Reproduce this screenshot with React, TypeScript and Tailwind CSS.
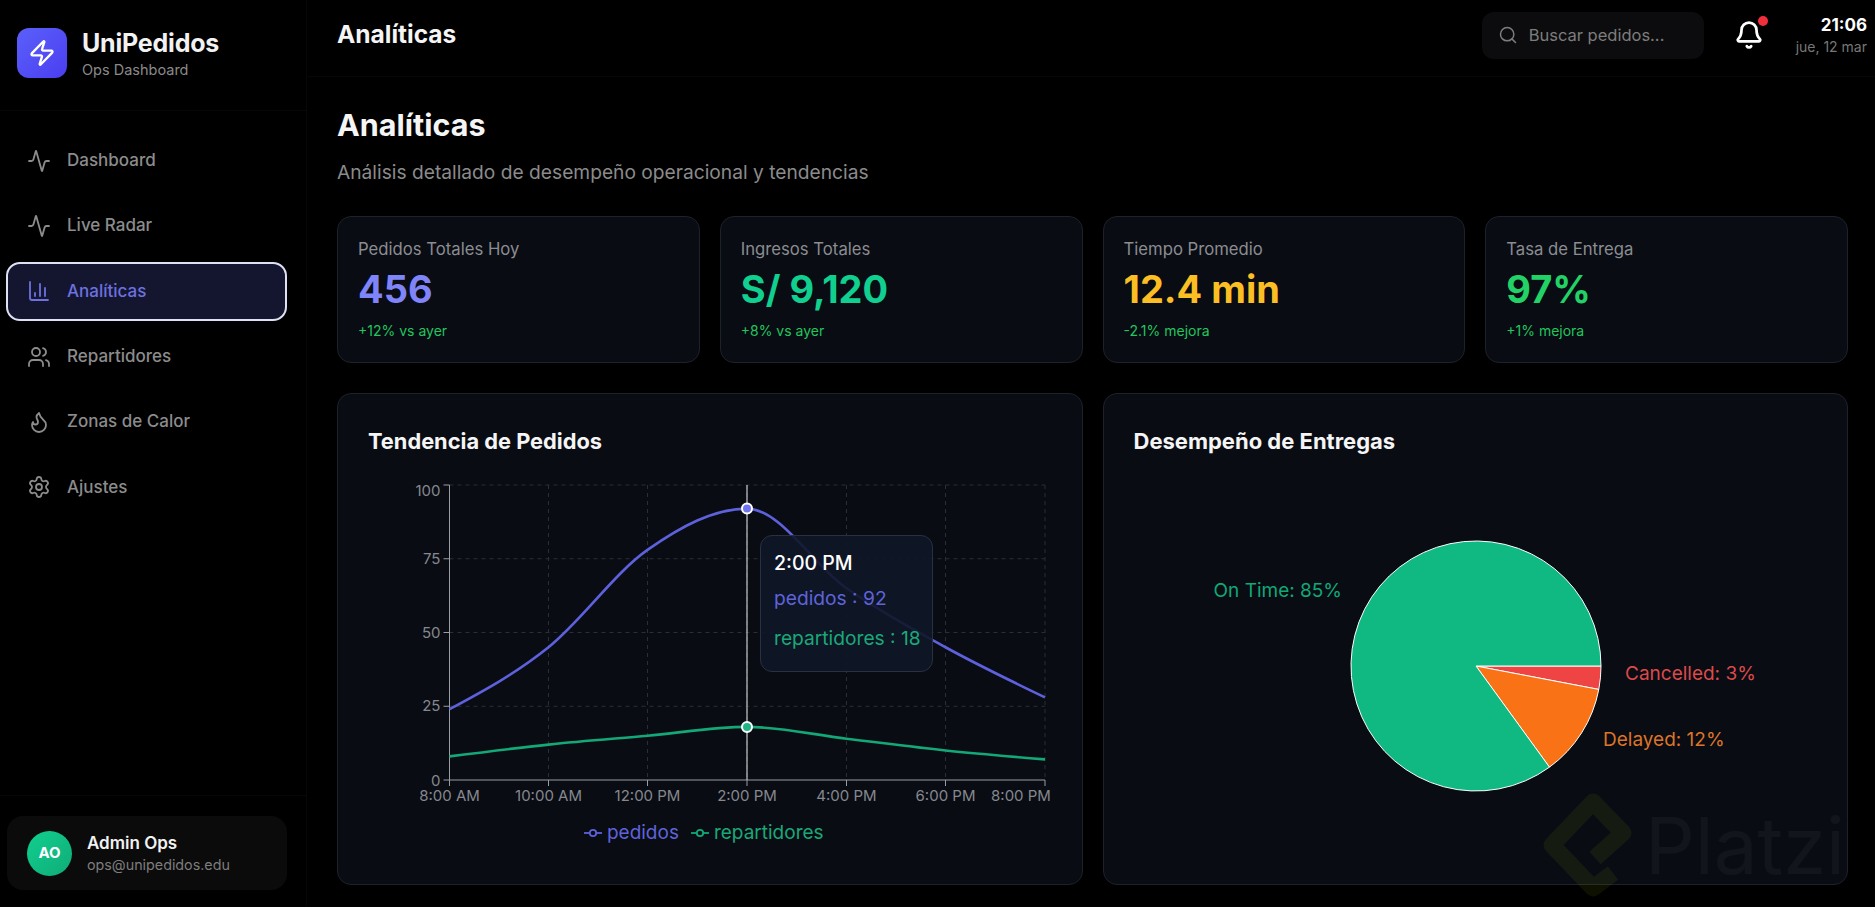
import { Activity, Bell, ChartColumn, Flame, Search, Settings, Users, Zap } from "lucide-react";

const nav = [
  { label: "Dashboard", icon: Activity },
  { label: "Live Radar", icon: Activity },
  { label: "Analíticas", icon: ChartColumn, active: true },
  { label: "Repartidores", icon: Users },
  { label: "Zonas de Calor", icon: Flame },
  { label: "Ajustes", icon: Settings },
];

const stats = [
  { label: "Pedidos Totales Hoy", value: "456", color: "text-[#7f84f8]", note: "+12% vs ayer" },
  { label: "Ingresos Totales", value: "S/ 9,120", color: "text-[#10cf8f]", note: "+8% vs ayer" },
  { label: "Tiempo Promedio", value: "12.4 min", color: "text-[#fbbf24]", note: "-2.1% mejora" },
  { label: "Tasa de Entrega", value: "97%", color: "text-[#22d267]", note: "+1% mejora" },
];

// chart coordinates, relative to the svg
const xs = [81.5, 180.5, 279.5, 379, 478.5, 577.5, 677];
const labels = ["8:00 AM", "10:00 AM", "12:00 PM", "2:00 PM", "4:00 PM", "6:00 PM", "8:00 PM"];
const pedidos = [24, 45, 78, 92, 65, 45, 28];
const repartidores = [8, 12, 15, 18, 14, 10, 7];
const yOf = (v: number) => 310 - v * 2.95;

function monotonePath(values: number[]) {
  const ys = values.map(yOf);
  const n = xs.length;
  const d: number[] = [];
  const s: number[] = [];
  for (let i = 0; i < n - 1; i++) s.push((ys[i + 1] - ys[i]) / (xs[i + 1] - xs[i]));
  for (let i = 1; i < n - 1; i++) {
    const h0 = xs[i] - xs[i - 1];
    const h1 = xs[i + 1] - xs[i];
    const p = (s[i - 1] * h1 + s[i] * h0) / (h0 + h1);
    d[i] = (Math.sign(s[i - 1]) + Math.sign(s[i])) * Math.min(Math.abs(s[i - 1]), Math.abs(s[i]), 0.5 * Math.abs(p)) || 0;
  }
  d[0] = (3 * s[0] - d[1]) / 2;
  d[n - 1] = (3 * s[n - 2] - d[n - 2]) / 2;
  let path = `M${xs[0]},${ys[0]}`;
  for (let i = 0; i < n - 1; i++) {
    const h = (xs[i + 1] - xs[i]) / 3;
    path += `C${xs[i] + h},${ys[i] + d[i] * h} ${xs[i + 1] - h},${ys[i + 1] - d[i + 1] * h} ${xs[i + 1]},${ys[i + 1]}`;
  }
  return path;
}

function slice(from: number, to: number) {
  const r = 125;
  const cx = 342;
  const cy = 196;
  const a = (from * Math.PI) / 180;
  const b = (to * Math.PI) / 180;
  const large = to - from > 180 ? 1 : 0;
  return `M${cx},${cy}L${cx + r * Math.cos(a)},${cy + r * Math.sin(a)}A${r},${r} 0 ${large} 1 ${cx + r * Math.cos(b)},${cy + r * Math.sin(b)}Z`;
}

function LineChart() {
  return (
    <svg width="684" height="340" className="block" fontFamily="Inter, sans-serif" fontSize="15">
      <g stroke="#2b2e35" strokeDasharray="4 4" strokeWidth="1">
        {[100, 75, 50, 25].map((v) => (
          <line key={v} x1={xs[0]} x2={xs[6]} y1={yOf(v)} y2={yOf(v)} />
        ))}
        {xs.slice(1).map((x) => (
          <line key={x} x1={x} x2={x} y1={15} y2={310} />
        ))}
      </g>
      <g stroke="#9a9da3" strokeWidth="1">
        <line x1={xs[0]} x2={xs[0]} y1={15} y2={310} />
        <line x1={xs[0]} x2={xs[6]} y1={310} y2={310} />
        {[100, 75, 50, 25, 0].map((v) => (
          <line key={v} x1={xs[0] - 6} x2={xs[0]} y1={yOf(v)} y2={yOf(v)} />
        ))}
        {xs.map((x) => (
          <line key={x} x1={x} x2={x} y1={310} y2={316} />
        ))}
      </g>
      <g fill="#85888e">
        {[100, 75, 50, 25, 0].map((v) => (
          <text key={v} x={xs[0] - 9} y={v === 100 ? yOf(v) + 11 : v === 0 ? yOf(v) + 6 : yOf(v) + 5} textAnchor="end">
            {v}
          </text>
        ))}
        {labels.map((l, i) => (
          <text key={l} x={i === 6 ? xs[i] - 24 : xs[i]} y={331} textAnchor="middle">
            {l}
          </text>
        ))}
      </g>
      <line x1={xs[3]} x2={xs[3]} y1={15} y2={310} stroke="#c9cacc" strokeWidth="1.2" />
      <path d={monotonePath(pedidos)} fill="none" stroke="#5e61dc" strokeWidth="2.6" />
      <path d={monotonePath(repartidores)} fill="none" stroke="#14a877" strokeWidth="2.6" />
      <circle cx={xs[3]} cy={yOf(92)} r="5" fill="#7073ee" stroke="#fff" strokeWidth="2" />
      <circle cx={xs[3]} cy={yOf(18)} r="5" fill="#1fb585" stroke="#fff" strokeWidth="2" />
    </svg>
  );
}

function LegendMark({ color }: { color: string }) {
  return (
    <svg width="18" height="10" viewBox="0 0 18 10" fill="none" stroke={color} strokeWidth="1.8">
      <line x1="0" x2="18" y1="5" y2="5" />
      <circle cx="9" cy="5" r="3.2" fill="#090c13" />
    </svg>
  );
}

function PieChart() {
  return (
    <svg width="684" height="392" className="block" fontFamily="Inter, sans-serif" fontSize="19">
      <g stroke="#fff" strokeWidth="1">
        <path d={slice(0, 10.8)} fill="#ef4444" />
        <path d={slice(10.8, 54)} fill="#f97316" />
        <path d={slice(54, 360)} fill="#10b981" />
      </g>
      <text x="208" y="127" textAnchor="end" fill="#10a877">On Time: 85%</text>
      <text x="491" y="210" fill="#dc4a4a">Cancelled: 3%</text>
      <text x="469" y="276" fill="#dd7427">Delayed: 12%</text>
    </svg>
  );
}

export default function App() {
  return (
    <div className="relative flex h-[907px] w-full overflow-hidden bg-black font-['Inter',sans-serif] text-white">
      <aside className="flex w-[307px] shrink-0 flex-col border-r border-[#070707]">
        <div className="flex h-[111px] items-start gap-[15px] border-b border-[#070707] px-[17px] pt-[28px]">
          <div className="flex h-[50px] w-[50px] items-center justify-center rounded-xl bg-gradient-to-br from-[#5b5ffa] to-[#4b3df0]">
            <Zap size={28} strokeWidth={2} />
          </div>
          <div>
            <div className="text-[25px] leading-[30px] font-bold tracking-[-0.2px] text-[#f2f2f2]">UniPedidos</div>
            <div className="mt-[3px] text-[14.5px] leading-[18px] text-[#8a8a8a]">Ops Dashboard</div>
          </div>
        </div>
        <nav className="flex flex-col gap-[6.4px] pt-[20px] pr-[19px] pl-[6px]">
          {nav.map((item) => (
            <div
              key={item.label}
              className={
                item.active
                  ? "flex h-[59px] items-center gap-[16px] rounded-[14px] border-2 border-[#dfe0f5] bg-[#14162f] px-[19px] text-[#6d71e0]"
                  : "flex h-[59px] items-center gap-[16px] rounded-[14px] border-2 border-transparent px-[19px] text-[#8c8c8c]"
              }
            >
              <item.icon size={24} strokeWidth={1.8} />
              <span className="text-[17px] font-medium">{item.label}</span>
            </div>
          ))}
        </nav>
        <div className="mt-auto border-t border-[#070707] pt-[20px] pr-[19px] pb-[17px] pl-[7px]">
          <div className="flex h-[74px] items-center gap-[15px] rounded-2xl bg-[#0b0b0b] px-[20px]">
            <div className="flex h-[45px] w-[45px] items-center justify-center rounded-full bg-gradient-to-br from-[#10cf8f] to-[#10ac78] text-[15px] font-bold">
              AO
            </div>
            <div>
              <div className="text-[17px] leading-[22px] font-semibold text-[#f2f2f2]">Admin Ops</div>
              <div className="text-[14.3px] leading-[21px] text-[#7d7d7d]">ops@unipedidos.edu</div>
            </div>
          </div>
        </div>
      </aside>

      <div className="flex min-w-0 flex-1 flex-col">
        <header className="flex h-[77px] shrink-0 items-center border-b border-[#070707] pr-[8px] pl-[30px]">
          <h2 className="-mt-[7px] text-[24.5px] font-bold text-[#f5f5f5]">Analíticas</h2>
          <div className="-mt-[6px] ml-auto flex h-[47px] w-[222px] items-center gap-[11px] rounded-xl bg-[#0c0c0e] px-[16px] text-[#7d7d7d]">
            <Search size={20} strokeWidth={1.8} />
            <span className="text-[16.5px]">Buscar pedidos...</span>
          </div>
          <div className="relative -mt-[6px] ml-[30px]">
            <Bell size={30} strokeWidth={2.2} />
            <span className="absolute top-[-4px] right-[-4px] h-[10px] w-[10px] rounded-full bg-[#ef2f3c]" />
          </div>
          <div className="-mt-[6px] ml-[32px] text-right">
            <div className="text-[17px] leading-[24px] font-bold">21:06</div>
            <div className="text-[14px] leading-[20px] text-[#777777]">jue, 12 mar</div>
          </div>
        </header>

        <main className="flex-1 pt-[30px] pr-[27px] pl-[30px]">
          <h1 className="text-[30.5px] leading-[36px] font-bold text-[#f5f5f5]">Analíticas</h1>
          <p className="mt-[16px] text-[19.2px] leading-[26px] text-[#8b8b8b]">
            Análisis detallado de desempeño operacional y tendencias
          </p>

          <div className="mt-[31px] grid grid-cols-4 gap-[20px]">
            {stats.map((s) => (
              <div key={s.label} className="h-[147px] rounded-[14px] border border-[#1d2129] bg-[#090c13] px-[20px] pt-[21px]">
                <div className="text-[16.7px] leading-[22px] text-[#8b8d91]">{s.label}</div>
                <div className={`mt-[6px] text-[38px] leading-[46px] font-bold ${s.color}`}>{s.value}</div>
                <div className="mt-[9px] text-[14px] leading-[20px] text-[#22c55e]">{s.note}</div>
              </div>
            ))}
          </div>

          <div className="mt-[30px] grid grid-cols-2 gap-[20px]">
            <section className="relative h-[492px] rounded-[14px] border border-[#1d2129] bg-[#090c13] px-[30px] pt-[32px]">
              <h3 className="text-[21.8px] leading-[30px] font-bold text-[#f5f5f5]">Tendencia de Pedidos</h3>
              <div className="mt-[14px]">
                <LineChart />
              </div>
              <div className="mt-[10px] flex items-center justify-center gap-[12px] pr-[12px] text-[19px] leading-[26px]">
                <span className="flex items-center gap-[5px] text-[#5f63db]">
                  <LegendMark color="#5e61dc" />
                  pedidos
                </span>
                <span className="flex items-center gap-[5px] text-[#1ba878]">
                  <LegendMark color="#14a877" />
                  repartidores
                </span>
              </div>
              <div className="absolute top-[141px] left-[422px] h-[137px] w-[173px] rounded-xl border border-[#2b3040] bg-[#101628]/90 px-[13px] pt-[13px]">
                <div className="text-[19.5px] leading-[28px] font-medium">2:00 PM</div>
                <div className="mt-[8px] text-[19.2px] leading-[26px] text-[#5f63db]">pedidos : 92</div>
                <div className="mt-[14px] text-[19.2px] leading-[26px] whitespace-nowrap text-[#1ba878]">repartidores : 18</div>
              </div>
            </section>

            <section className="h-[492px] rounded-[14px] border border-[#1d2129] bg-[#090c13] px-[30px] pt-[32px]">
              <h3 className="text-[22px] leading-[30px] font-bold text-[#f5f5f5]">Desempeño de Entregas</h3>
              <div className="mt-[14px]">
                <PieChart />
              </div>
            </section>
          </div>
        </main>
      </div>

      {/* marca de agua */}
      <div className="pointer-events-none absolute top-[793px] left-[1543px] flex items-start gap-[12px]">
        <svg width="90" height="104" viewBox="0 0 90 104" fill="none" stroke="#c8e000" strokeOpacity="0.07" strokeWidth="17" strokeLinejoin="round">
          <path d="M52,65 L80,40 L50,9 L9,52 L50,95 L70,80" />
        </svg>
        <span className="mt-[5px] text-[78px] leading-[96px] text-white/[0.035]">Platzi</span>
      </div>
    </div>
  );
}
